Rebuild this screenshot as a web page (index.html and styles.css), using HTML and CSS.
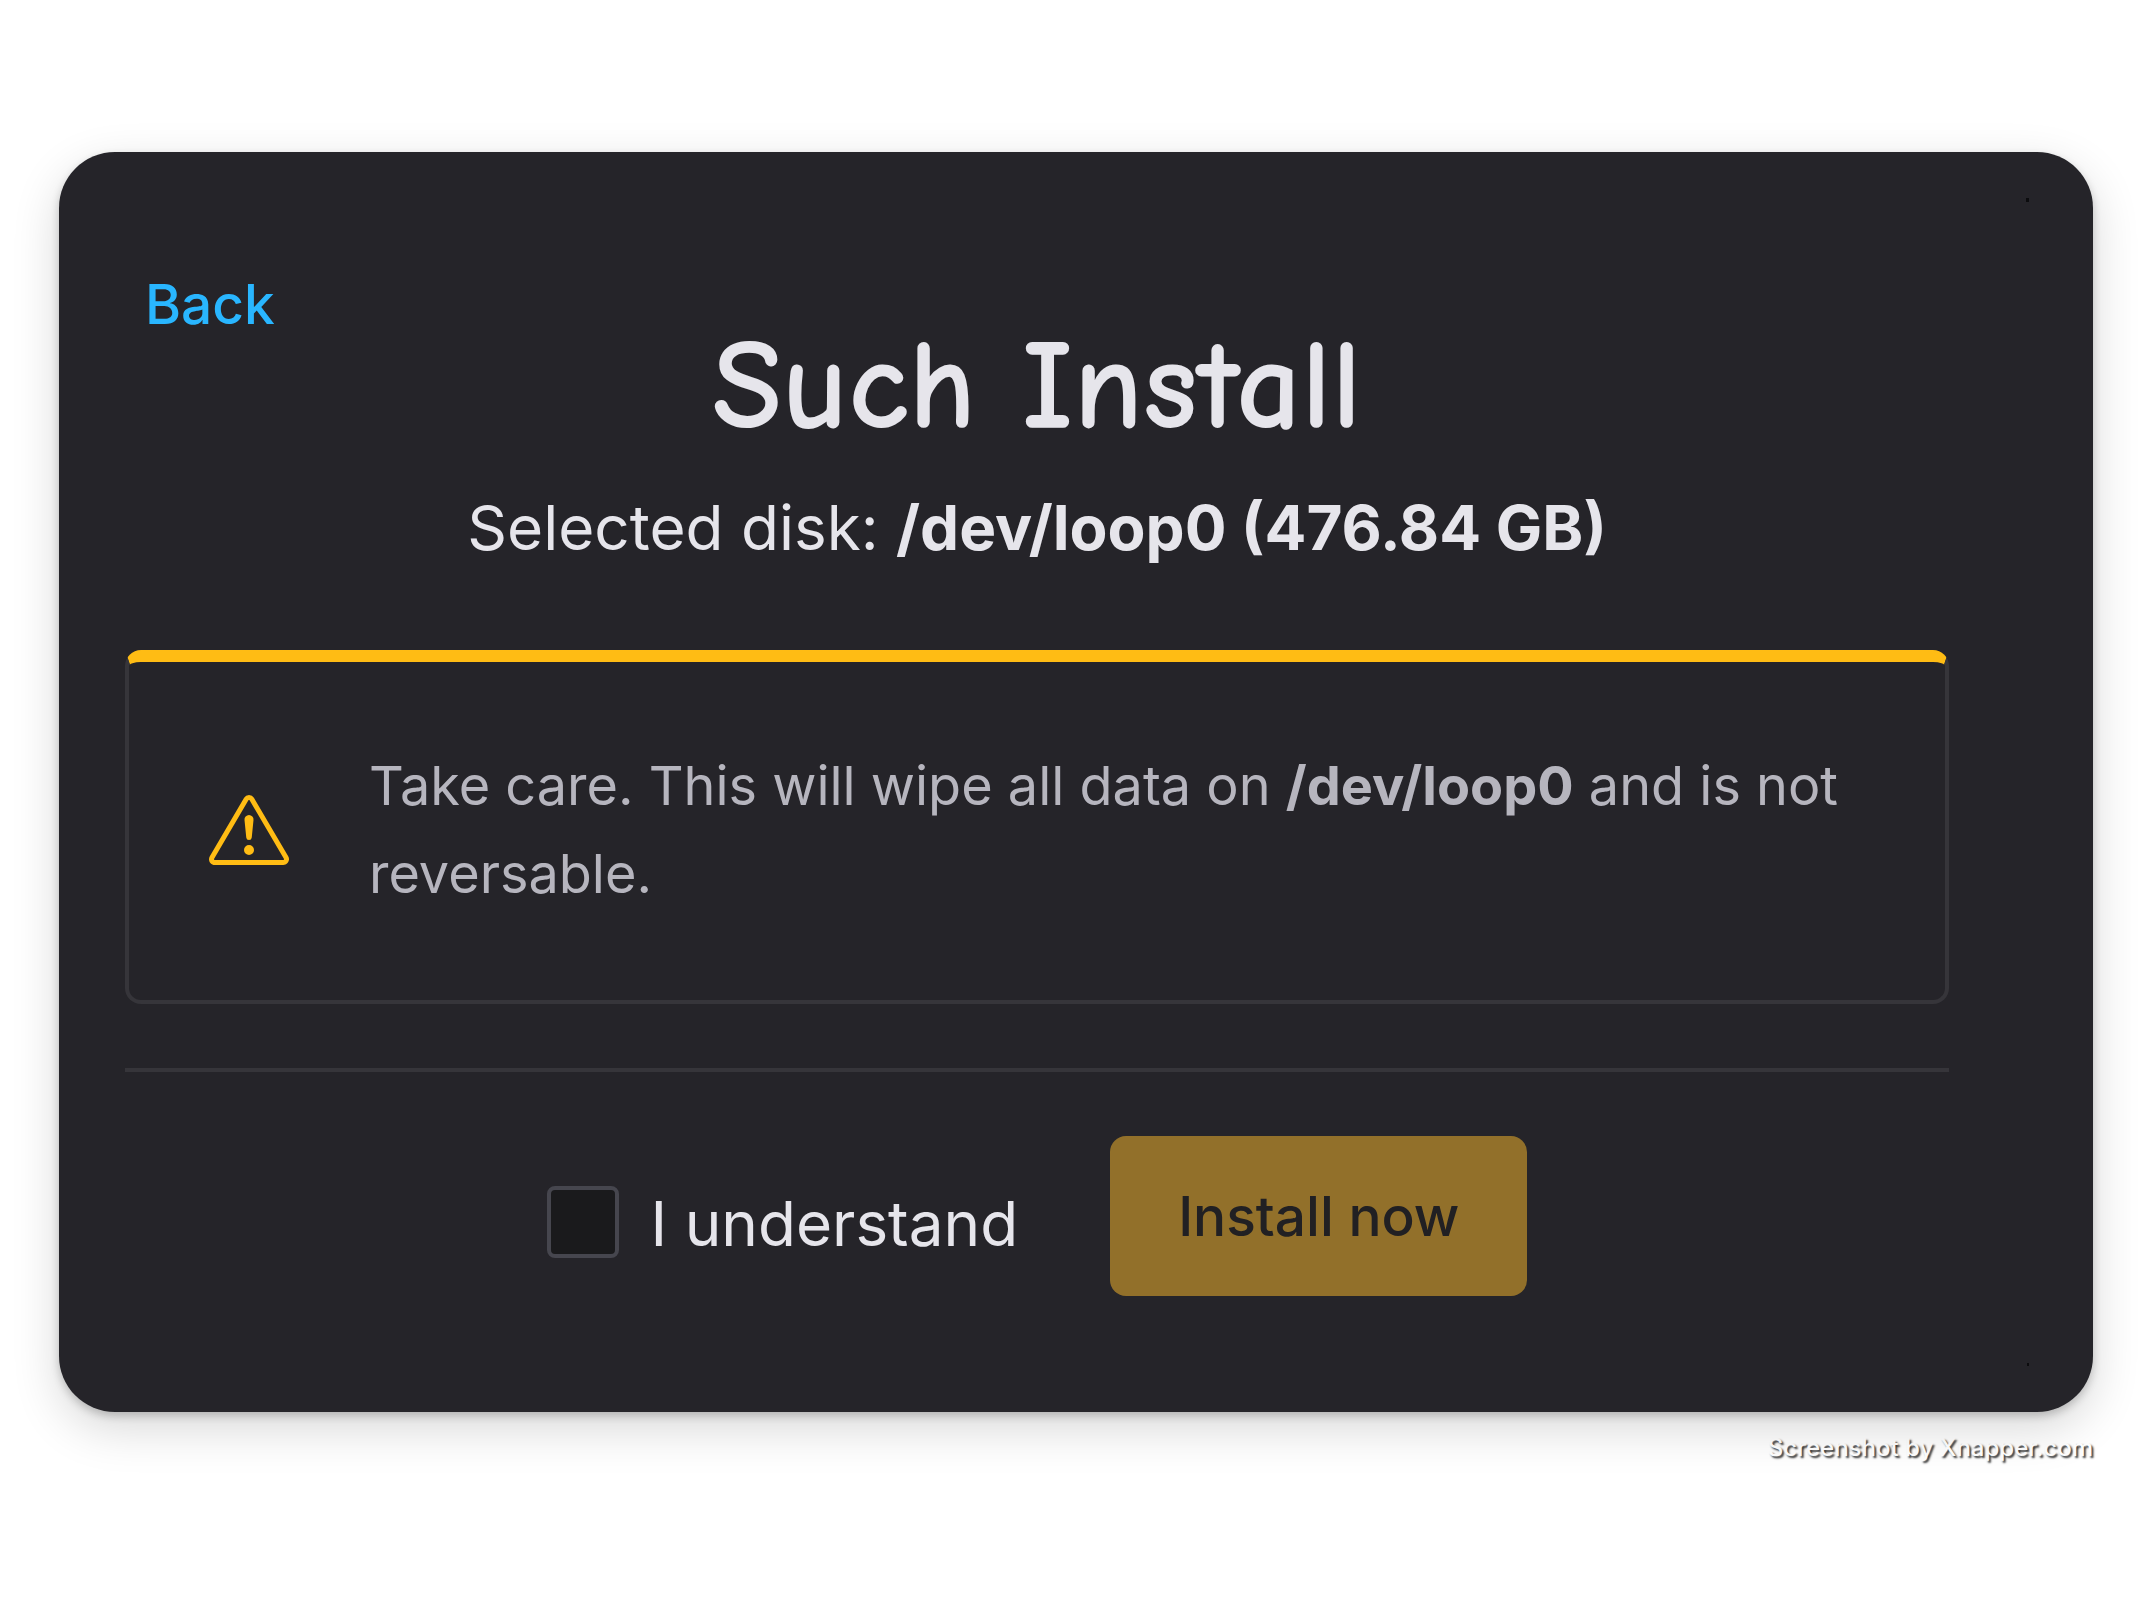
FILE: index.html
```html
<!DOCTYPE html>
<html lang="en">
<head>
<meta charset="utf-8">
<meta name="viewport" content="width=device-width, initial-scale=1">
<title>Such Install</title>
<link rel="stylesheet" href="styles.css">
</head>
<body>
<main class="card">
  <nav class="nav"><a class="back" href="#">Back</a></nav>
  <h1 class="title">Such Install</h1>
  <p class="disk">Selected disk: <strong>/dev/loop0 (476.84 GB)</strong></p>
  <section class="alert" role="alert">
    <svg class="alert-icon" viewBox="0 0 16 16" fill="currentColor" aria-hidden="true">
      <path d="M7.938 2.016A.13.13 0 0 1 8.002 2a.13.13 0 0 1 .063.016.146.146 0 0 1 .054.057l6.857 11.667c.036.06.035.124.002.183a.163.163 0 0 1-.054.06.116.116 0 0 1-.066.017H1.146a.115.115 0 0 1-.066-.017.163.163 0 0 1-.054-.06.176.176 0 0 1 .002-.183L7.884 2.073a.147.147 0 0 1 .054-.057zm1.044-.45a1.13 1.13 0 0 0-1.96 0L.165 13.233c-.457.778.091 1.767.98 1.767h13.713c.889 0 1.438-.99.98-1.767L8.982 1.566z"/>
      <path d="M7.002 12a1 1 0 1 1 2 0 1 1 0 0 1-2 0zM7.1 5.995a.905.905 0 1 1 1.8 0l-.35 3.507a.552.552 0 0 1-1.1 0L7.1 5.995z"/>
    </svg>
    <p class="alert-text">Take care. This will wipe all data on <strong>/dev/loop0</strong> and is not reversable.</p>
  </section>
  <hr class="divider">
  <form class="actions">
    <label class="confirm"><input class="checkbox" type="checkbox"><span class="confirm-text">I understand</span></label>
    <button class="install" type="button" disabled>Install now</button>
  </form>
</main>
<footer class="credit">Screenshot by Xnapper.com</footer>
</body>
</html>
```

FILE: styles.css
```css
* {
  box-sizing: border-box;
}

body {
  margin: 0;
  padding: 152px 59px;
  background: #fff;
  color: #e6e5eb;
  font-family: Inter, "Liberation Sans", sans-serif;
  font-size: 62px;
  line-height: 88px;
}

.card {
  position: relative;
  display: flex;
  flex-direction: column;
  padding: 112px 144px 116px 66px;
  border-radius: 56px;
  background: #252429;
  box-shadow: 0 16px 48px rgba(0, 0, 0, 0.16), 0 4px 8px rgba(0, 0, 0, 0.2);
}

/* Tiny dark marks near the card's right corners */
.card::before,
.card::after {
  content: "";
  position: absolute;
  right: 64px;
  width: 3px;
  height: 4px;
  background: #0c0c0e;
}

.card::before {
  top: 46px;
}

.card::after {
  bottom: 46px;
  width: 2px;
  height: 3px;
}

.nav {
  padding-left: 20px;
  font-size: 55px;
  font-weight: 500;
  line-height: 80px;
}

.back {
  color: #29b6ff;
  text-decoration: none;
}

.title {
  margin: 0;
  font-family: "Comic Neue", Inter, sans-serif;
  font-size: 128px;
  font-weight: 700;
  line-height: 84px;
  text-align: center;
}

.disk {
  margin: 56px 0 78px;
  text-align: center;
}

.disk strong {
  font-weight: 700;
}

.alert {
  display: flex;
  align-items: center;
  gap: 80px;
  padding: 80px 80px 82px;
  border: 4px solid #36353a;
  border-top: 12px solid #ffbc14;
  border-radius: 16px;
  color: #b6b5be;
  font-size: 54px;
}

.alert-icon {
  flex: none;
  width: 80px;
  height: 80px;
  color: #ffbc14;
}

.alert-text {
  margin: 0;
}

.divider {
  width: 100%;
  height: 4px;
  margin: 64px 0;
  border: 0;
  background: #36353a;
}

.actions {
  display: flex;
  align-items: center;
  justify-content: center;
  gap: 92px;
}

.confirm {
  display: flex;
  align-items: center;
  gap: 32px;
  padding-top: 12px;
}

.confirm-text {
  padding-top: 4px;
}

.checkbox {
  appearance: none;
  width: 72px;
  height: 72px;
  margin: 0;
  border: 4px solid #46464e;
  border-radius: 8px;
  background: #1a1a1c;
}

.install {
  height: 160px;
  padding: 0 68px;
  border: 0;
  border-radius: 16px;
  background: #92702a;
  color: #212023;
  font: 500 55px Inter, "Liberation Sans", sans-serif;
}

.credit {
  padding-top: 20px;
  color: #fff;
  font-size: 24px;
  font-weight: 500;
  line-height: 32px;
  text-align: right;
  text-shadow: 2px 2px 2px rgba(0, 0, 0, 0.8);
}
```
